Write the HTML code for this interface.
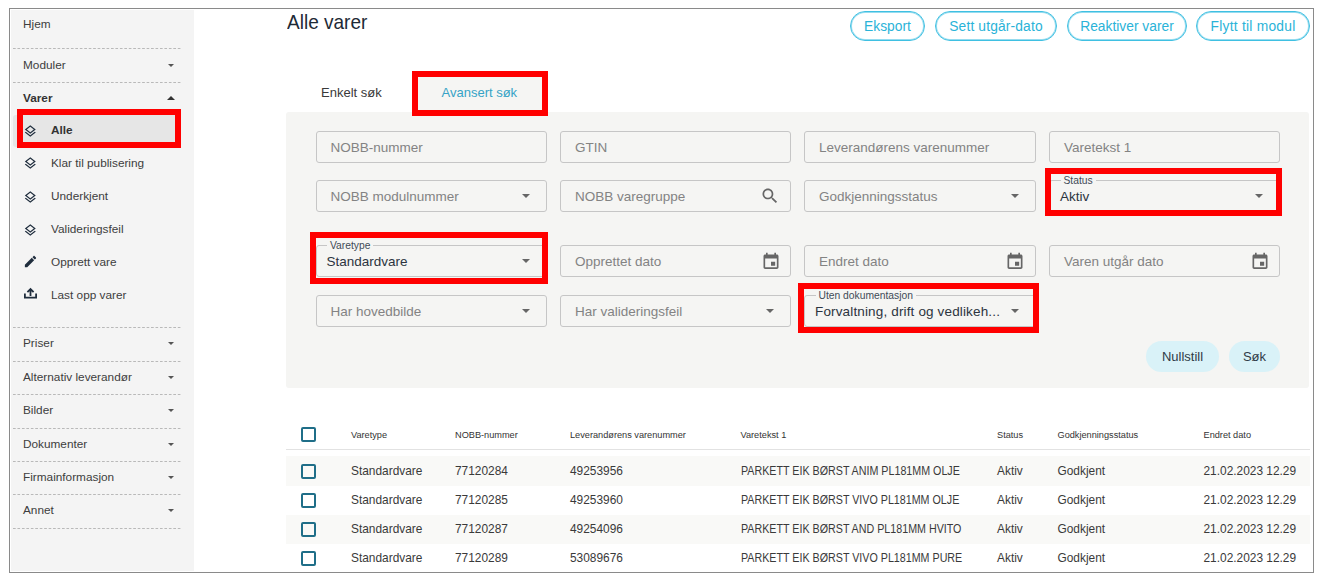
<!DOCTYPE html>
<html><head><meta charset="utf-8">
<style>
*{box-sizing:border-box;margin:0;padding:0}
html,body{width:1324px;height:579px;overflow:hidden;background:#fff;font-family:"Liberation Sans",sans-serif;color:#3a3a3a}
.abs{position:absolute}
#frame{position:absolute;left:9px;top:8px;width:1305px;height:565px;border:1px solid #8a8a8a}
#side{position:absolute;left:11px;top:10px;width:183px;height:561px;background:#f4f4f4}
.sd{position:absolute;left:12.7px;width:169.5px;height:1px;background-image:linear-gradient(to right,#b9b9b9 0,#b9b9b9 2.7px,transparent 2.7px);background-size:4.46px 1px}
.st{position:absolute;left:23px;font-size:11.8px;white-space:nowrap;line-height:14px;color:#3d3d3d}
.car{position:absolute;width:0;height:0;border-left:3px solid transparent;border-right:3px solid transparent;border-top:3px solid #555}
.caru{position:absolute;width:0;height:0;border-left:4px solid transparent;border-right:4px solid transparent;border-bottom:4px solid #333}
.si{position:absolute;left:51px;font-size:11.8px;white-space:nowrap;line-height:14px;color:#3d3d3d}
.ico{position:absolute;left:24px}
.red{position:absolute;border:6px solid #ff0000}
.btn{position:absolute;top:11px;height:30px;border:1px solid #3fc0e2;box-shadow:inset 0 0 0 1px rgba(63,192,226,0.55);border-radius:15px;color:#2ab3d8;font-size:13.8px;line-height:29.5px;text-align:center;white-space:nowrap}

.tx{white-space:nowrap;line-height:16px}
.fld{position:absolute;width:231px;height:32px;border:1px solid #c6c6c6;border-radius:3px}

.ph{position:absolute;left:14px;top:8px;font-size:13.5px;line-height:16px;color:#838383;white-space:nowrap}
.val{position:absolute;left:10px;top:7.5px;font-size:13.5px;line-height:16px;color:#2c3440;white-space:nowrap}
.lg{position:absolute;left:10.5px;top:-6px;padding:0 3px;background:#f5f5f3;font-size:10.3px;line-height:12px;color:#3f4b57;white-space:nowrap}
.dd{position:absolute;right:16px;top:13px;width:0;height:0;border-left:4.5px solid transparent;border-right:4.5px solid transparent;border-top:4.5px solid #666}
.ic{position:absolute}
.pb{position:absolute;top:341px;height:31px;border-radius:15.5px;background:#d9f2f8;color:#2f3b47;font-size:13px;line-height:31px;text-align:center}
.cb{position:absolute;left:301px;width:14.5px;height:14.5px;border:2px solid #1f6e88;border-radius:2px}
.th{position:absolute;top:430px;font-size:9.2px;line-height:11px;color:#333;white-space:nowrap}
.td{position:absolute;font-size:11.9px;line-height:16px;color:#3a3a3a;white-space:nowrap}
.up{transform:scaleX(0.9);transform-origin:0 0}
</style></head><body>
<div id="frame"></div>
<div id="side">
</div>
<!-- sidebar content (absolute in page coords) -->
<div class="st" style="top:17px">Hjem</div>
<div class="sd" style="top:48px"></div>
<div class="st" style="top:58px">Moduler</div><div class="car" style="left:168px;top:64px"></div>
<div class="sd" style="top:82px"></div>
<div class="st" style="top:91px;font-weight:bold;color:#333">Varer</div><div class="caru" style="left:167px;top:96px"></div>

<div class="abs" style="left:13px;top:115px;width:167px;height:32px;background:#e6e6e6;border-radius:3px 0 0 3px"></div>
<div class="si" style="top:123px;font-weight:bold;color:#333">Alle</div>
<div class="si" style="top:156px">Klar til publisering</div>
<div class="si" style="top:189px">Underkjent</div>
<div class="si" style="top:222px">Valideringsfeil</div>
<div class="si" style="top:255px">Opprett vare</div>
<div class="si" style="top:288px">Last opp varer</div>

<div class="sd" style="top:327px"></div>
<div class="st" style="top:336px">Priser</div><div class="car" style="left:168px;top:342px"></div>
<div class="sd" style="top:361px"></div>
<div class="st" style="top:370px">Alternativ leverandør</div><div class="car" style="left:168px;top:376px"></div>
<div class="sd" style="top:394px"></div>
<div class="st" style="top:403px">Bilder</div><div class="car" style="left:168px;top:409px"></div>
<div class="sd" style="top:428px"></div>
<div class="st" style="top:437px">Dokumenter</div><div class="car" style="left:168px;top:443px"></div>
<div class="sd" style="top:461px"></div>
<div class="st" style="top:470px">Firmainformasjon</div><div class="car" style="left:168px;top:476px"></div>
<div class="sd" style="top:494px"></div>
<div class="st" style="top:503px">Annet</div><div class="car" style="left:168px;top:509px"></div>
<div class="sd" style="top:528px"></div>

<div class="red" style="left:17px;top:109px;width:164px;height:39px"></div>

<!-- title -->
<div class="abs" style="left:287px;top:9.8px;font-size:20.8px;line-height:24px;color:#1e2a36;white-space:nowrap;transform:scaleX(0.915);transform-origin:0 0">Alle varer</div>
<div class="btn" style="left:850px;width:75px">Eksport</div>
<div class="btn" style="left:935px;width:122px;letter-spacing:0.15px">Sett utgår-dato</div>
<div class="btn" style="left:1067px;width:120px">Reaktiver varer</div>
<div class="btn" style="left:1196px;width:114px;letter-spacing:0.25px">Flytt til modul</div>


<!-- tabs -->
<div class="abs" style="left:418px;top:77px;width:124px;height:35px;background:#f5f5f3"></div>
<div class="abs tx" style="left:321px;top:85px;font-size:13px;color:#3a3a3a">Enkelt søk</div>
<div class="abs tx" style="left:441.5px;top:85px;font-size:13px;color:#36a3c6">Avansert søk</div>
<!-- panel -->
<div class="abs" style="left:286px;top:112px;width:1023px;height:276px;background:#f5f5f3;border-radius:3px"></div>

<!-- row 1 -->
<div class="fld" style="left:315.5px;top:131px"><span class="ph">NOBB-nummer</span></div>
<div class="fld" style="left:560px;top:131px"><span class="ph">GTIN</span></div>
<div class="fld" style="width:232px;left:804px;top:131px"><span class="ph">Leverandørens varenummer</span></div>
<div class="fld" style="left:1049px;top:131px"><span class="ph">Varetekst 1</span></div>
<!-- row 2 -->
<div class="fld" style="left:315.5px;top:180px"><span class="ph">NOBB modulnummer</span><i class="dd"></i></div>
<div class="fld" style="left:560px;top:180px"><span class="ph">NOBB varegruppe</span>
<svg class="ic" style="left:199px;top:5px" width="20" height="20" viewBox="0 0 24 24"><path fill="#666" d="M15.5 14h-.79l-.28-.27C15.41 12.59 16 11.11 16 9.5 16 5.91 13.09 3 9.5 3S3 5.910 3 9.5 5.91 16 9.5 16c1.61 0 3.09-.59 4.23-1.57l.27.28v.79l5 4.99L20.49 19l-4.990-5zm-6 0C7.01 14 5 11.99 5 9.5S7.01 5 9.5 5 14 7.01 14 9.5 11.99 14 9.5 14z"/></svg></div>
<div class="fld" style="width:232px;left:804px;top:180px"><span class="ph">Godkjenningsstatus</span><i class="dd"></i></div>
<div class="fld ol" style="left:1049px;top:180px"><span class="lg">Status</span><span class="val">Aktiv</span><i class="dd"></i></div>
<!-- row 3 -->
<div class="fld ol" style="left:315.5px;top:245px"><span class="lg">Varetype</span><span class="val">Standardvare</span><i class="dd"></i></div>
<div class="fld" style="left:560px;top:245px"><span class="ph">Opprettet dato</span><svg class="ic" style="left:200px;top:5.8px" width="20" height="19.3" viewBox="0 0 24 24" preserveAspectRatio="none"><path fill="#666" d="M17 12h-5v5h5v-5zM16 1v2H8V1H6v2H5c-1.11 0-1.99.9-1.99 2L3 19c0 1.1.89 2 2 2h14c1.1 0 2-.9 2-2V5c0-1.1-.9-2-2-2h-1V1h-2zm3 18H5V8h14v11z"/></svg></div>
<div class="fld" style="width:232px;left:804px;top:245px"><span class="ph">Endret dato</span><svg class="ic" style="left:200px;top:5.8px" width="20" height="19.3" viewBox="0 0 24 24" preserveAspectRatio="none"><path fill="#666" d="M17 12h-5v5h5v-5zM16 1v2H8V1H6v2H5c-1.11 0-1.99.9-1.99 2L3 19c0 1.1.89 2 2 2h14c1.1 0 2-.9 2-2V5c0-1.1-.9-2-2-2h-1V1h-2zm3 18H5V8h14v11z"/></svg></div>
<div class="fld" style="left:1049px;top:245px"><span class="ph">Varen utgår dato</span><svg class="ic" style="left:200px;top:5.8px" width="20" height="19.3" viewBox="0 0 24 24" preserveAspectRatio="none"><path fill="#666" d="M17 12h-5v5h5v-5zM16 1v2H8V1H6v2H5c-1.11 0-1.99.9-1.99 2L3 19c0 1.1.89 2 2 2h14c1.1 0 2-.9 2-2V5c0-1.1-.9-2-2-2h-1V1h-2zm3 18H5V8h14v11z"/></svg></div>
<!-- row 4 -->
<div class="fld" style="left:315.5px;top:295px"><span class="ph">Har hovedbilde</span><i class="dd"></i></div>
<div class="fld" style="left:560px;top:295px"><span class="ph">Har valideringsfeil</span><i class="dd"></i></div>
<div class="fld ol" style="width:232px;left:804px;top:295px"><span class="lg">Uten dokumentasjon</span><span class="val" style="letter-spacing:0.15px">Forvaltning, drift og vedlikeh...</span><i class="dd"></i></div>

<div class="pb" style="left:1146px;width:73px">Nullstill</div>
<div class="pb" style="left:1229px;width:51px">Søk</div>

<!-- table -->
<div class="abs" style="left:286px;top:449px;width:1024px;height:1px;background:#e2e2e2"></div>
<div class="abs" style="left:286px;top:456px;width:1024px;height:30px;background:#f9f9f7"></div>
<div class="abs" style="left:286px;top:514.7px;width:1024px;height:29.3px;background:#f9f9f7"></div>
<div class="cb" style="top:427px"></div>
<div class="th" style="left:351px">Varetype</div>
<div class="th" style="left:455px">NOBB-nummer</div>
<div class="th" style="left:570px">Leverandørens varenummer</div>
<div class="th" style="left:740.5px">Varetekst 1</div>
<div class="th" style="left:997px">Status</div>
<div class="th" style="left:1057.5px">Godkjenningsstatus</div>
<div class="th" style="left:1203.5px">Endret dato</div>
<div class="cb" style="top:464.0px"></div><div class="td" style="left:351px;top:463.0px">Standardvare</div><div class="td" style="left:455px;top:463.0px">77120284</div><div class="td" style="left:570px;top:463.0px">49253956</div><div class="td up" style="left:740.5px;top:463.0px">PARKETT EIK BØRST ANIM PL181MM OLJE</div><div class="td" style="left:997px;top:463.0px">Aktiv</div><div class="td" style="left:1057.5px;top:463.0px">Godkjent</div><div class="td" style="left:1203.5px;top:463.0px">21.02.2023 12.29</div>
<div class="cb" style="top:493.0px"></div><div class="td" style="left:351px;top:492.0px">Standardvare</div><div class="td" style="left:455px;top:492.0px">77120285</div><div class="td" style="left:570px;top:492.0px">49253960</div><div class="td up" style="left:740.5px;top:492.0px">PARKETT EIK BØRST VIVO PL181MM OLJE</div><div class="td" style="left:997px;top:492.0px">Aktiv</div><div class="td" style="left:1057.5px;top:492.0px">Godkjent</div><div class="td" style="left:1203.5px;top:492.0px">21.02.2023 12.29</div>
<div class="cb" style="top:522.0px"></div><div class="td" style="left:351px;top:521.0px">Standardvare</div><div class="td" style="left:455px;top:521.0px">77120287</div><div class="td" style="left:570px;top:521.0px">49254096</div><div class="td up" style="left:740.5px;top:521.0px">PARKETT EIK BØRST AND PL181MM HVITO</div><div class="td" style="left:997px;top:521.0px">Aktiv</div><div class="td" style="left:1057.5px;top:521.0px">Godkjent</div><div class="td" style="left:1203.5px;top:521.0px">21.02.2023 12.29</div>
<div class="cb" style="top:551.0px"></div><div class="td" style="left:351px;top:550.0px">Standardvare</div><div class="td" style="left:455px;top:550.0px">77120289</div><div class="td" style="left:570px;top:550.0px">53089676</div><div class="td up" style="left:740.5px;top:550.0px">PARKETT EIK BØRST VIVO PL181MM PURE</div><div class="td" style="left:997px;top:550.0px">Aktiv</div><div class="td" style="left:1057.5px;top:550.0px">Godkjent</div><div class="td" style="left:1203.5px;top:550.0px">21.02.2023 12.29</div>

<svg class="abs" style="left:23.2px;top:124px" width="14.6" height="14.6" viewBox="0 0 24 24"><path fill="#1f2d3d" d="M11.99 18.54l-7.37-5.73L3 14.07l9 7 9-7-1.63-1.27-7.38 5.74zM12 16l7.36-5.73L21 9l-9-7-9 7 1.63 1.27L12 16zm0-11.47L17.74 9 12 13.47 6.26 9 12 4.53z"/></svg><svg class="abs" style="left:23.2px;top:156.3px" width="14.6" height="14.6" viewBox="0 0 24 24"><path fill="#1f2d3d" d="M11.99 18.54l-7.37-5.73L3 14.07l9 7 9-7-1.63-1.27-7.38 5.74zM12 16l7.36-5.73L21 9l-9-7-9 7 1.63 1.27L12 16zm0-11.47L17.74 9 12 13.47 6.26 9 12 4.53z"/></svg><svg class="abs" style="left:23.2px;top:189.5px" width="14.6" height="14.6" viewBox="0 0 24 24"><path fill="#1f2d3d" d="M11.99 18.54l-7.37-5.73L3 14.07l9 7 9-7-1.63-1.27-7.38 5.74zM12 16l7.36-5.73L21 9l-9-7-9 7 1.63 1.27L12 16zm0-11.47L17.74 9 12 13.47 6.26 9 12 4.53z"/></svg><svg class="abs" style="left:23.2px;top:222.5px" width="14.6" height="14.6" viewBox="0 0 24 24"><path fill="#1f2d3d" d="M11.99 18.54l-7.37-5.73L3 14.07l9 7 9-7-1.63-1.27-7.38 5.74zM12 16l7.36-5.73L21 9l-9-7-9 7 1.63 1.27L12 16zm0-11.47L17.74 9 12 13.47 6.26 9 12 4.53z"/></svg><svg class="abs" style="left:23px;top:254px" width="15" height="15" viewBox="0 0 24 24"><path fill="#1f2d3d" d="M3 17.25V21h3.75L17.81 9.94l-3.75-3.75L3 17.25zM20.71 7.04c.39-.39.39-1.02 0-1.41l-2.34-2.34c-.39-.39-1.02-.39-1.41 0l-1.83 1.83 3.75 3.75 1.83-1.83z"/></svg><svg class="abs" style="left:23px;top:287px" width="15" height="13" viewBox="0 0 15 13"><path fill="none" stroke="#1f2d3d" stroke-width="1.8" d="M1.9 6.5V10.6H13.1V6.5"/><path fill="none" stroke="#1f2d3d" stroke-width="1.8" d="M7.5 9V2.4M4.4 5.2L7.5 2.1 10.6 5.2"/></svg><div class="red" style="left:412px;top:71px;width:136px;height:45px"></div>
<div class="red" style="left:1045px;top:168px;width:237px;height:48px"></div>
<div class="red" style="left:310px;top:232px;width:238px;height:52px"></div>
<div class="red" style="left:798px;top:283px;width:241px;height:50px"></div>
</body></html>
